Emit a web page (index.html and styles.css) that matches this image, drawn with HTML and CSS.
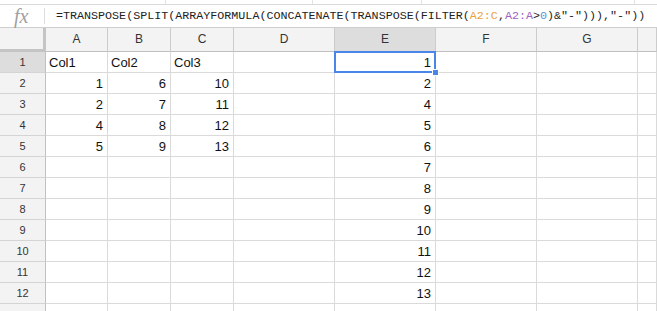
FILE: index.html
```html
<!DOCTYPE html>
<html lang="en">
<head>
    <meta charset="UTF-8">
    <title>Sheet</title>
    <link rel="stylesheet" href="styles.css">
</head>
<body>
    <div class="toolbar-strip">
        <span class="strip-cell" style="width:166px"></span>
        <span class="strip-cell" style="width:147px"></span>
        <span class="strip-cell" style="width:109px"></span>
        <span class="strip-cell" style="width:213px"></span>
    </div>
    <div class="formula-bar">
        <div class="fx">fx</div>
        <div class="formula">=TRANSPOSE(SPLIT(ARRAYFORMULA(CONCATENATE(TRANSPOSE(FILTER(<span class="r1">A2:C</span>,<span class="r2">A2:A</span>&gt;<span class="num">0</span>)&amp;"-"))),"-"))</div>
    </div>

    <div class="grid">
        <div class="corner"></div>
        <div class="ch">A</div>
        <div class="ch">B</div>
        <div class="ch">C</div>
        <div class="ch">D</div>
        <div class="ch sel">E</div>
        <div class="ch">F</div>
        <div class="ch">G</div>
        <div class="ch"></div>

        <div class="rh sel">1</div>
        <div class="c">Col1</div><div class="c">Col2</div><div class="c">Col3</div><div class="c"></div>
        <div class="c n active">1<span class="sel-box"></span><span class="handle"></span></div>
        <div class="c"></div><div class="c"></div><div class="c"></div>

        <div class="rh">2</div>
        <div class="c n">1</div><div class="c n">6</div><div class="c n">10</div><div class="c"></div><div class="c n">2</div>
        <div class="c"></div><div class="c"></div><div class="c"></div>

        <div class="rh">3</div>
        <div class="c n">2</div><div class="c n">7</div><div class="c n">11</div><div class="c"></div><div class="c n">4</div>
        <div class="c"></div><div class="c"></div><div class="c"></div>

        <div class="rh">4</div>
        <div class="c n">4</div><div class="c n">8</div><div class="c n">12</div><div class="c"></div><div class="c n">5</div>
        <div class="c"></div><div class="c"></div><div class="c"></div>

        <div class="rh">5</div>
        <div class="c n">5</div><div class="c n">9</div><div class="c n">13</div><div class="c"></div><div class="c n">6</div>
        <div class="c"></div><div class="c"></div><div class="c"></div>

        <div class="rh">6</div>
        <div class="c"></div><div class="c"></div><div class="c"></div><div class="c"></div><div class="c n">7</div>
        <div class="c"></div><div class="c"></div><div class="c"></div>

        <div class="rh">7</div>
        <div class="c"></div><div class="c"></div><div class="c"></div><div class="c"></div><div class="c n">8</div>
        <div class="c"></div><div class="c"></div><div class="c"></div>

        <div class="rh">8</div>
        <div class="c"></div><div class="c"></div><div class="c"></div><div class="c"></div><div class="c n">9</div>
        <div class="c"></div><div class="c"></div><div class="c"></div>

        <div class="rh">9</div>
        <div class="c"></div><div class="c"></div><div class="c"></div><div class="c"></div><div class="c n">10</div>
        <div class="c"></div><div class="c"></div><div class="c"></div>

        <div class="rh">10</div>
        <div class="c"></div><div class="c"></div><div class="c"></div><div class="c"></div><div class="c n">11</div>
        <div class="c"></div><div class="c"></div><div class="c"></div>

        <div class="rh">11</div>
        <div class="c"></div><div class="c"></div><div class="c"></div><div class="c"></div><div class="c n">12</div>
        <div class="c"></div><div class="c"></div><div class="c"></div>

        <div class="rh">12</div>
        <div class="c"></div><div class="c"></div><div class="c"></div><div class="c"></div><div class="c n">13</div>
        <div class="c"></div><div class="c"></div><div class="c"></div>

        <div class="rh"></div>
        <div class="c"></div><div class="c"></div><div class="c"></div><div class="c"></div><div class="c"></div>
        <div class="c"></div><div class="c"></div><div class="c"></div>
    </div>
</body>
</html>
```

FILE: styles.css
```css
*,
*::before,
*::after {
    box-sizing: border-box;
    margin: 0;
    padding: 0;
}

body {
    background: #fff;
    font-family: "Liberation Sans", Arial, sans-serif;
    color: #222;
    overflow: hidden;
}

.toolbar-strip {
    display: flex;
    height: 5px;
    border-bottom: 1px solid #dadada;
}

.strip-cell {
    height: 4px;
    border-right: 1px solid #e3e3e3;
}

.formula-bar {
    display: flex;
    align-items: center;
    height: 23px;
    border-bottom: 1px solid #cfcfcf;
}

.fx {
    width: 45px;
    padding-left: 14px;
    font-family: "Liberation Serif", serif;
    font-style: italic;
    font-size: 20px;
    color: #a0a0a0;
    line-height: 18px;
    position: relative;
    height: 18px;
}

.fx::after {
    content: "";
    position: absolute;
    right: 0;
    top: 1px;
    height: 16px;
    border-right: 1px solid #dcdcdc;
}

.formula {
    padding-left: 11px;
    font-family: "Liberation Mono", "DejaVu Sans Mono", monospace;
    font-size: 11.7px;
    color: #222;
    white-space: nowrap;
    line-height: 18px;
}

.r1 {
    color: #e8a23a;
}

.r2 {
    color: #9c63c6;
}

.num {
    color: #4f95d8;
}

.grid {
    display: grid;
    grid-template-columns: 46px 62px 63px 63px 101px 101px 101px 101px 1fr;
    grid-template-rows: 24px repeat(13, 21px);
}

.corner {
    background: #f3f3f3;
    border-right: 3px solid #c4c4c4;
    border-bottom: 3px solid #c4c4c4;
}

.ch {
    background: #f3f3f3;
    border-right: 1px solid #cccccc;
    border-bottom: 1px solid #c0c0c0;
    font-size: 12px;
    color: #333;
    text-align: center;
    line-height: 23px;
}

.rh {
    background: #f3f3f3;
    border-right: 1px solid #c0c0c0;
    border-bottom: 1px solid #d4d4d4;
    font-size: 11px;
    color: #333;
    text-align: center;
    line-height: 21px;
}

.ch.sel,
.rh.sel {
    background: #dddddd;
}

.c {
    border-right: 1px solid #dadada;
    border-bottom: 1px solid #dadada;
    font-size: 13px;
    color: #111;
    line-height: 21px;
    padding: 0 4px 0 3px;
    white-space: nowrap;
}

.c.n {
    text-align: right;
}

.active {
    position: relative;
}

.sel-box {
    position: absolute;
    left: -1px;
    top: -1px;
    right: -1px;
    bottom: -1px;
    border: 2px solid #4a86e8;
}

.handle {
    position: absolute;
    right: -4px;
    bottom: -4px;
    width: 7px;
    height: 7px;
    background: #4a86e8;
    border: 1px solid #fff;
}
```
